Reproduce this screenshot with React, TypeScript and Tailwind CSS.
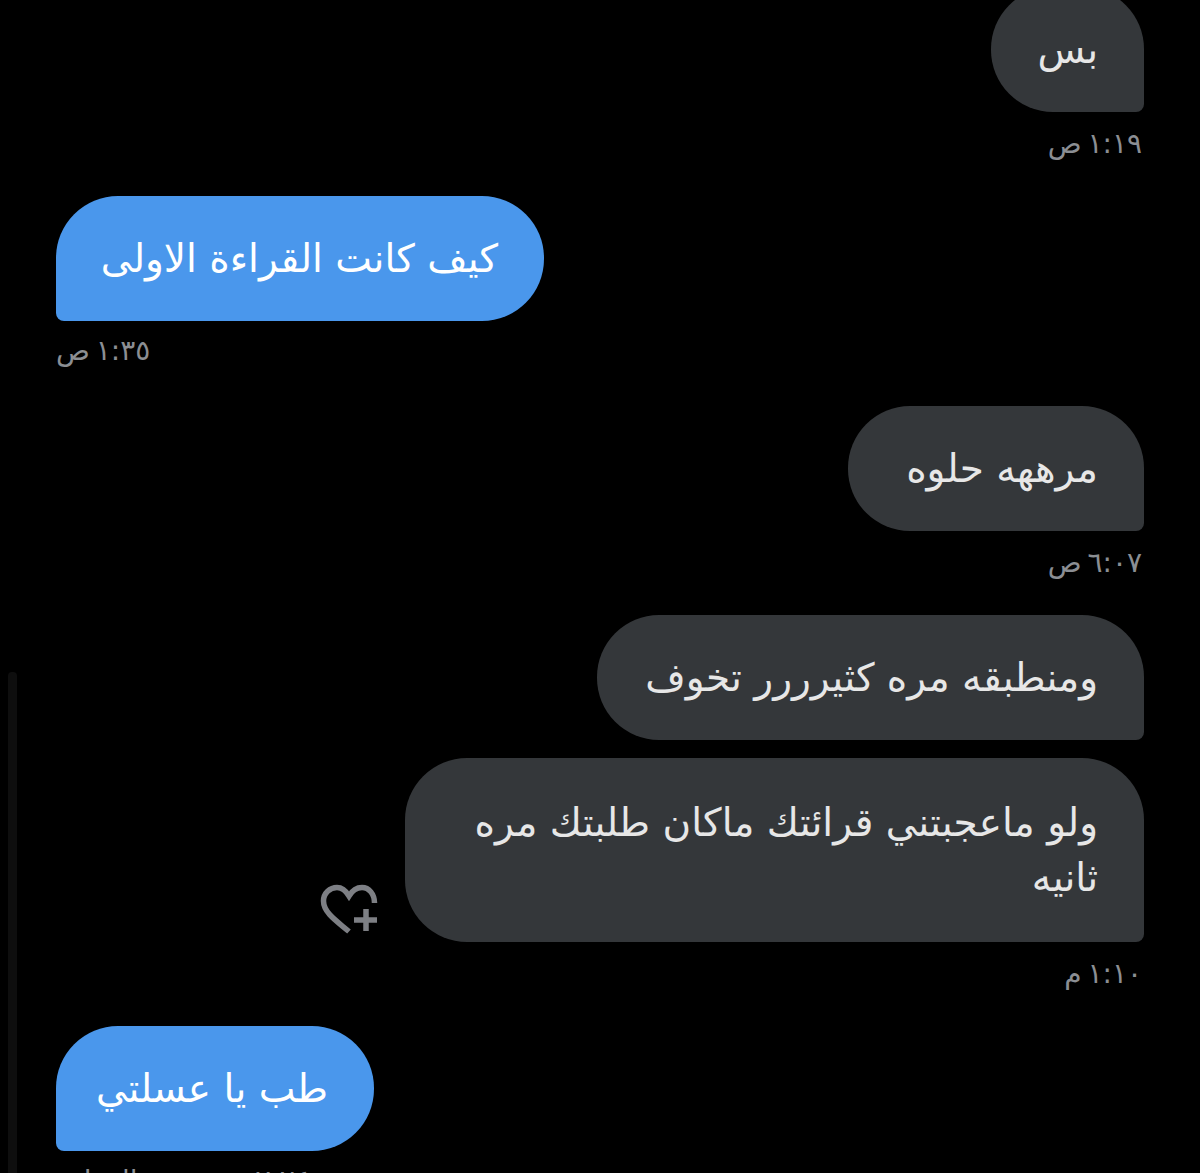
const arabic = "font-['DejaVu_Sans',sans-serif]";
const timeStyle = 'h-[34px] text-[28px] leading-[34px] tracking-[-1px] [word-spacing:-3px] text-[#8b8e93]';

function Sent({ text, time, w, mt, h = 'h-[125px]' }: { text: string; time?: string; w: string; mt: string; h?: string }) {
  return (
    <div className={`flex flex-col items-end pr-[56px] ${mt}`}>
      <div className={`flex items-center justify-start ${w} ${h} rounded-[62px] rounded-br-[8px] bg-[#34373a] px-[46px] text-[39px] leading-[55px] text-[#e7e7e7]`} dir="rtl">
        {text}
      </div>
      {time && <div className={`mt-[15px] pr-[2px] ${timeStyle}`} dir="rtl">{time}</div>}
    </div>
  );
}

function Received({ text, time, w, mt }: { text: string; time: string; w: string; mt: string }) {
  return (
    <div className={`flex flex-col items-start pl-[56px] ${mt}`}>
      <div className={`flex h-[125px] items-center ${w} rounded-[62px] rounded-bl-[8px] bg-[#4a97ec] px-[46px] text-[39px] leading-[55px] whitespace-nowrap text-white`} dir="rtl">
        {text}
      </div>
      <div className={`mt-[13px] ${timeStyle}`} dir="rtl">{time}</div>
    </div>
  );
}

export default function App() {
  return (
    <div className={`relative h-[1173px] w-[1200px] overflow-hidden bg-black ${arabic}`}>
      <div className="absolute bottom-0 left-[8px] top-[672px] w-[9px] rounded-t-[4px] bg-[#0e0e0e]" />
      <Sent text="بس" time="١:١٩ ص" w="w-[153px]" mt="mt-[-13px]" />
      <Received text="كيف كانت القراءة الاولى" time="١:٣٥ ص" w="w-[488px]" mt="mt-[35px]" />
      <Sent text="مرههه حلوه" time="٦:٠٧ ص" w="w-[296px]" mt="mt-[38px]" />
      <Sent text="ومنطبقه مره كثيرررر تخوف" w="w-[547px]" mt="mt-[35px]" />
      <div className="relative">
        <Sent text="ولو ماعجبتني قرائتك ماكان طلبتك مره ثانيه" time="١:١٠ م" w="w-[739px]" h="h-[184px]" mt="mt-[18px]" />
        <svg className="absolute left-[318px] top-[122px]" width="62" height="56" viewBox="0 0 62 56" fill="none" stroke="#7d7f84" strokeWidth="5.5">
          <path d="M31 51.5 C20 42 5.5 33 5.5 21 C5.5 13 12 7.5 19 7.5 C24 7.5 28 11 31 16 C34 11 38 7.5 44 7.5 C51 7.5 56.5 14 56.5 23" />
          <path d="M48 29 V51 M36 40 H59" />
        </svg>
      </div>
      <Received text="طب يا عسلتي" time="٧:٢٤ ص · تمت القراءة" w="w-[318px]" mt="mt-[35px]" />
    </div>
  );
}
